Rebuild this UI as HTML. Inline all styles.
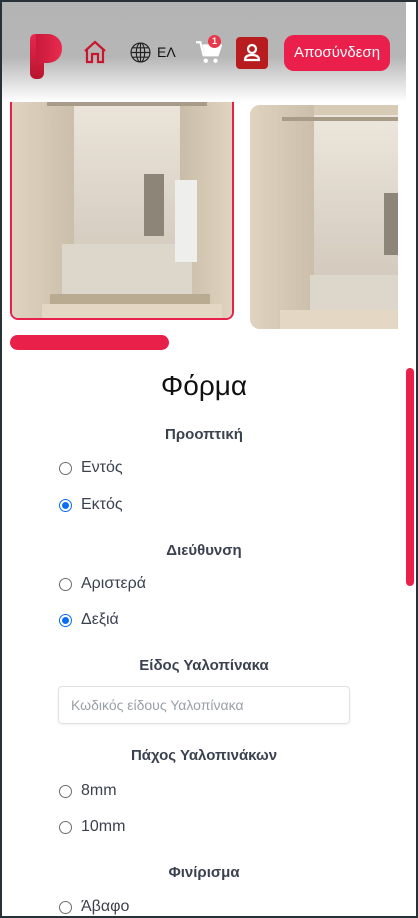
<!DOCTYPE html>
<html><head><meta charset="utf-8"><style>
*{margin:0;padding:0;box-sizing:border-box}
body{width:418px;height:918px;background:#263238;font-family:"Liberation Sans","Noto Sans CJK SC",sans-serif;overflow:hidden;position:relative}
.page{position:absolute;left:2px;top:2px;width:414px;height:914px;background:#fff;overflow:hidden}
.hdr{position:absolute;left:0;top:0;width:404px;height:100px;background:linear-gradient(#b4b4b4 0,#b6b6b6 55%,#fff 100%);z-index:5}
.ab{position:absolute}
.img{position:absolute;overflow:hidden;background:#d8cbb6}
.img .bw{position:absolute;background:linear-gradient(#ece6dc,#d9d1c5 60%,#cfc5b6)}
.img .lw{position:absolute;background:linear-gradient(90deg,#e0d4c0,#cbbfab)}
.img .rw{position:absolute;background:linear-gradient(90deg,#c9bda9,#e2d6c3)}
.img .fl{position:absolute;background:#ddd6ca}
.h{position:absolute;left:0;width:404px;text-align:center;color:#3a4250;font-size:15px;font-weight:bold}
.r{position:absolute;left:57px;font-size:16px;color:#3a4250;display:flex;align-items:center}
.r i{display:inline-block;width:13px;height:13px;border:1px solid #6d6d6d;border-radius:50%;margin-right:9px;box-sizing:border-box}
.r i.on{border:1.5px solid #0b6cf5;background:radial-gradient(#0b6cf5 0 3.2px,#fff 3.7px)}
</style></head><body><div class="page">
<div class="hdr">
 <div class="ab" style="left:28px;top:32px;width:32px;height:45px">
  <div class="ab" style="left:0;top:0;width:14px;height:45px;border-radius:5px 2px 6px 6px;background:linear-gradient(#e8284f,#b8152e)"></div>
  <div class="ab" style="left:6px;top:0;width:26px;height:29px;border-radius:0 14px 14px 0;background:linear-gradient(90deg,#c91a3a,#e92a4e)"></div>
 </div>
 <svg class="ab" style="left:81px;top:38px" width="24" height="24" viewBox="0 0 24 24" fill="none" stroke="#c8162d" stroke-width="2.2"><path d="M2 11 L12 2 L22 11 M4 9 V22 H9 V14 H15 V22 H20 V9"/></svg>
 <svg class="ab" style="left:128px;top:40px" width="21" height="21" viewBox="0 0 20 20" fill="none" stroke="#222" stroke-width="1.1"><circle cx="10" cy="10" r="9"/><ellipse cx="10" cy="10" rx="4" ry="9"/><path d="M1 10H19M2.5 5.5H17.5M2.5 14.5H17.5M10 1V19"/></svg>
 <div class="ab" style="left:155px;top:42px;font-size:14px;color:#111">ΕΛ</div>
 <svg class="ab" style="left:194px;top:38px" width="26" height="24" viewBox="0 0 24 22" fill="#fff"><path d="M0 2H4L7 14H20L23 5H6" stroke="#fff" stroke-width="2" fill="none"/><path d="M6 5H23L20 14H8Z"/><circle cx="9" cy="19" r="2"/><circle cx="18" cy="19" r="2"/></svg>
 <div class="ab" style="left:206px;top:33px;width:13px;height:13px;border-radius:50%;background:#e8384a;color:#fff;font-size:9px;text-align:center;line-height:13px;font-weight:bold">1</div>
 <div class="ab" style="left:234px;top:35px;width:32px;height:32px;border-radius:4px;background:#b81c1f">
  <svg class="ab" style="left:7px;top:6px" width="18" height="20" viewBox="0 0 18 20" fill="none" stroke="#fff" stroke-width="2.2"><circle cx="9" cy="6" r="4"/><path d="M2 17 Q2 12 9 12 Q16 12 16 17 Z"/></svg>
 </div>
 <div class="ab" style="left:282px;top:33px;width:106px;height:36px;border-radius:10px;background:#ea1f4b;color:#fff;font-size:15px;text-align:center;line-height:36px">Αποσύνδεση</div>
</div>

<div class="img" style="left:8px;top:90px;width:224px;height:228px;border:2px solid #e8204a;border-radius:8px">
 <div class="bw" style="left:60px;top:0;width:120px;height:210px"></div>
 <div class="lw" style="left:0;top:0;width:62px;height:228px"></div>
 <div class="rw" style="left:168px;top:0;width:56px;height:228px"></div>
 <div class="fl" style="left:50px;top:150px;width:130px;height:60px"></div>
 <div class="ab" style="left:38px;top:200px;width:160px;height:10px;background:#b9aa92"></div>
 <div class="ab" style="left:30px;top:210px;width:180px;height:20px;background:#e4d8c4"></div>
 <div class="ab" style="left:132px;top:80px;width:20px;height:62px;background:#8d8577"></div>
 <div class="ab" style="left:163px;top:86px;width:22px;height:82px;background:#eeeeec"></div>
 <div class="ab" style="left:35px;top:8px;width:160px;height:4px;background:#a89c88"></div>
</div>
<div class="img" style="left:248px;top:103px;width:148px;height:224px;border-radius:10px 0 0 10px">
 <div class="bw" style="left:62px;top:10px;width:100px;height:200px"></div>
 <div class="lw" style="left:0;top:0;width:64px;height:224px"></div>
 <div class="fl" style="left:60px;top:170px;width:100px;height:40px"></div>
 <div class="ab" style="left:30px;top:205px;width:130px;height:20px;background:#e4d8c4"></div>
 <div class="ab" style="left:134px;top:88px;width:14px;height:62px;background:#8d8577"></div>
 <div class="ab" style="left:32px;top:12px;width:120px;height:4px;background:#a89c88"></div>
</div>

<div class="ab" style="left:8px;top:333px;width:159px;height:15px;border-radius:8px;background:#e8204a"></div>
<div class="ab" style="left:404px;top:366px;width:8px;height:218px;border-radius:4px;background:#e8204a"></div>

<div class="ab" style="left:0;top:368px;width:404px;text-align:center;font-size:28px;color:#111">Φόρμα</div>
<div class="h" style="top:424px">Προοπτική</div>
<div class="r" style="top:457px"><i></i>Εντός</div>
<div class="r" style="top:494px"><i class="on"></i>Εκτός</div>
<div class="h" style="top:540px">Διεύθυνση</div>
<div class="r" style="top:573px"><i></i>Αριστερά</div>
<div class="r" style="top:609px"><i class="on"></i>Δεξιά</div>
<div class="h" style="top:655px">Είδος Υαλοπίνακα</div>
<div class="ab" style="left:56px;top:684px;width:292px;height:38px;border:1px solid #dfe1e5;border-radius:4px;box-shadow:0 1px 2px rgba(0,0,0,.06);font-size:14px;color:#9aa0a8;line-height:36px;padding-left:12px">Κωδικός είδους Υαλοπίνακα</div>
<div class="h" style="top:745px">Πάχος Υαλοπινάκων</div>
<div class="r" style="top:780px"><i></i>8mm</div>
<div class="r" style="top:816px"><i></i>10mm</div>
<div class="h" style="top:862px">Φινίρισμα</div>
<div class="r" style="top:896px"><i></i>Άβαφο</div>
</div></body></html>
